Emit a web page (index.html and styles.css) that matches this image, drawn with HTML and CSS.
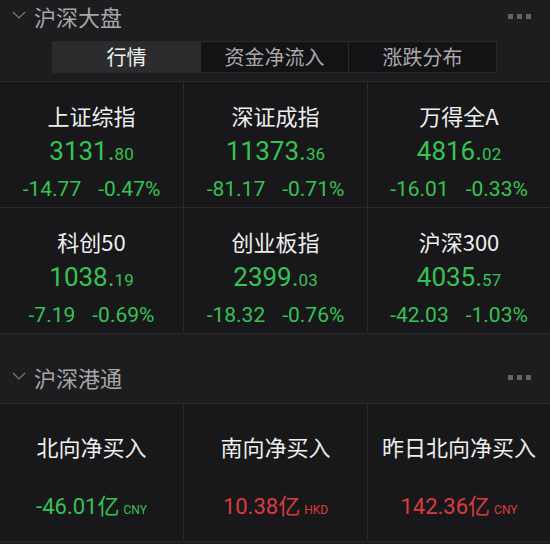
FILE: index.html
```html
<!doctype html>
<html>
<head>
<meta charset="utf-8">
<title>沪深大盘</title>
<link rel="stylesheet" href="styles.css">
</head>

<body>
<div class="sec-head">
	<svg class="chev" width="14" height="8" viewBox="0 0 14 8"><path d="M1 1 L7 7 L13 1" fill="none" stroke="#7c7c80" stroke-width="1.2"/></svg>
	<span class="sec-title">沪深大盘</span>
	<span class="dots"><i></i><i></i><i></i></span>
</div>
<div class="tabs">
	<div class="tab active">行情</div>
	<div class="tab">资金净流入</div>
	<div class="tab">涨跌分布</div>
</div>
<div class="grid idx">
	<div class="cell">
		<div class="name">上证综指</div>
		<div class="price up"><b>3131.</b><small>80</small></div>
		<div class="chg up"><span>-14.77</span><span>-0.47%</span></div>
	</div>
	<div class="cell">
		<div class="name">深证成指</div>
		<div class="price up"><b>11373.</b><small>36</small></div>
		<div class="chg up"><span>-81.17</span><span>-0.71%</span></div>
	</div>
	<div class="cell">
		<div class="name">万得全A</div>
		<div class="price up"><b>4816.</b><small>02</small></div>
		<div class="chg up"><span>-16.01</span><span>-0.33%</span></div>
	</div>
	<div class="cell">
		<div class="name">科创50</div>
		<div class="price up"><b>1038.</b><small>19</small></div>
		<div class="chg up"><span>-7.19</span><span>-0.69%</span></div>
	</div>
	<div class="cell">
		<div class="name">创业板指</div>
		<div class="price up"><b>2399.</b><small>03</small></div>
		<div class="chg up"><span>-18.32</span><span>-0.76%</span></div>
	</div>
	<div class="cell">
		<div class="name">沪深300</div>
		<div class="price up"><b>4035.</b><small>57</small></div>
		<div class="chg up"><span>-42.03</span><span>-1.03%</span></div>
	</div>
</div>

<div class="sec-head sec2">
	<svg class="chev" width="14" height="8" viewBox="0 0 14 8"><path d="M1 1 L7 7 L13 1" fill="none" stroke="#7c7c80" stroke-width="1.2"/></svg>
	<span class="sec-title">沪深港通</span>
	<span class="dots"><i></i><i></i><i></i></span>
</div>
<div class="grid flow">
	<div class="cell">
		<div class="name">北向净买入</div>
		<div class="amt up">-46.01<em>亿</em><small>CNY</small></div>
	</div>
	<div class="cell">
		<div class="name">南向净买入</div>
		<div class="amt down">10.38<em>亿</em><small>HKD</small></div>
	</div>
	<div class="cell">
		<div class="name">昨日北向净买入</div>
		<div class="amt down">142.36<em>亿</em><small>CNY</small></div>
	</div>
</div>
</body>
</html>
```

FILE: styles.css
```css
* {margin:0; padding:0; box-sizing:border-box;}
body {width:550px; background:#1d1d1f; font-family:Roboto, "Noto Sans CJK SC", sans-serif; color:#ececec;}

.sec-head {display:flex; align-items:center; height:32px; padding:0 19px 0 12px;}
.sec-head .chev {display:block; margin-right:8px; margin-top:-2px;}
.sec-title {font-family:"Noto Sans CJK SC", sans-serif; font-size:22px; color:#a6a6a8; line-height:32px; flex:1;}
.dots {display:flex; gap:4px;}
.dots i {display:block; width:5px; height:5px; background:#636366;}
.sec2 {margin-top:27px; margin-bottom:10px;}

.tabs {display:flex; width:445px; height:32px; margin:9px 0 8px 52px; background:#131315; border:1px solid #29292b;}
.tab {flex:1; text-align:center; line-height:30px; font-family:"Noto Sans CJK SC", sans-serif; font-size:20px; color:#a9a9ab; border-left:1px solid #29292b;}
.tab:first-child {border-left:none;}
.tab.active {background:#2c2c2f; color:#f2f2f2;}

.grid {display:grid; grid-template-columns:183px 183px 182px; gap:1px; background:#2a2a2c; border-top:1px solid #2a2a2c; border-bottom:1px solid #2a2a2c;}
.cell {background:#18181a; text-align:center;}
.idx .cell {height:125px; padding-top:18px;}
.flow .cell {height:137px; padding-top:27px;}

.name {font-family:"Noto Sans CJK SC", sans-serif; font-size:22px; line-height:30px; color:#eeeeee;}
.up {color:#36c254;}
.down {color:#dc3a3f;}

.price {margin-top:6px; line-height:30px; white-space:nowrap;}
.price b {font-weight:400; font-size:26px;}
.price small {font-size:17px;}
.chg {margin-top:4px; line-height:30px; font-size:21px; display:flex; justify-content:center; gap:17px;}

.amt {margin-top:28px; line-height:30px; font-size:22px; white-space:nowrap;}
.amt em {font-style:normal; font-family:"Noto Sans CJK SC", sans-serif; font-size:22px;}
.amt small {font-size:12px; margin-left:4px;}
```
